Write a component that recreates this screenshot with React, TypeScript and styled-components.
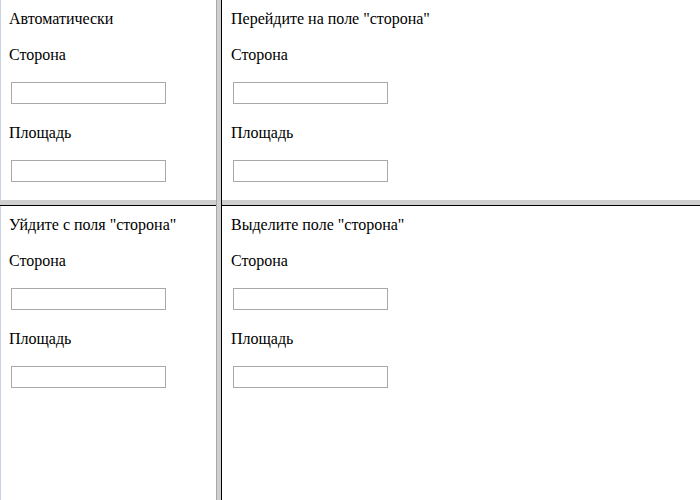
import React from "react";
import styled, { createGlobalStyle } from "styled-components";

const Global = createGlobalStyle`
  html, body { margin: 0; padding: 0; background: #fff; }
  body { width: 700px; height: 500px; overflow: hidden; }
  #root { width: 700px; height: 500px; }
`;

const Frameset = styled.div`
  display: grid;
  grid-template-columns: 216px 6px 1fr;
  width: 700px;
  height: 500px;
  box-shadow: inset 1px 0 0 #c9d3e4;
  font-family: "Liberation Serif", "Times New Roman", serif;
  font-size: 16px;
  color: #000;
`;

const Column = styled.div`
  display: grid;
  grid-template-rows: 200px 6px 1fr;
  min-width: 0;
`;

const VDivider = styled.div`
  background: #cfcfcf;
  border-left: 1px solid #a9a9a9;
  border-right: 1px solid #000;
  box-sizing: border-box;
`;

const HDivider = styled.div`
  background: #cfcfcf;
  border-bottom: 1px solid #000;
  box-sizing: border-box;
`;

const Frame = styled.div`
  display: flex;
  flex-direction: column;
  align-items: flex-start;
  padding: 10px 9px 0 9px;
  overflow: hidden;
`;

const Line = styled.div<{ $gap?: number }>`
  line-height: 18px;
  height: 18px;
  white-space: nowrap;
  margin-top: ${(p) => p.$gap ?? 0}px;
`;

const Field = styled.input`
  box-sizing: border-box;
  width: 155px;
  height: 22px;
  margin: 18px 0 0 2px;
  border: 1px solid #a9a9a9;
  background: #fff;
  padding: 0;
  outline: none;
`;

const Panel: React.FC<{ title: string }> = ({ title }) => (
  <Frame>
    <Line>{title}</Line>
    <Line $gap={18}>Сторона</Line>
    <Field type="text" />
    <Line $gap={20}>Площадь</Line>
    <Field type="text" />
  </Frame>
);

export default function App() {
  return (
    <>
      <Global />
      <Frameset>
        <Column>
          <Panel title="Автоматически" />
          <HDivider />
          <Panel title='Уйдите с поля "сторона"' />
        </Column>
        <VDivider />
        <Column>
          <Panel title='Перейдите на поле "сторона"' />
          <HDivider />
          <Panel title='Выделите поле "сторона"' />
        </Column>
      </Frameset>
    </>
  );
}
